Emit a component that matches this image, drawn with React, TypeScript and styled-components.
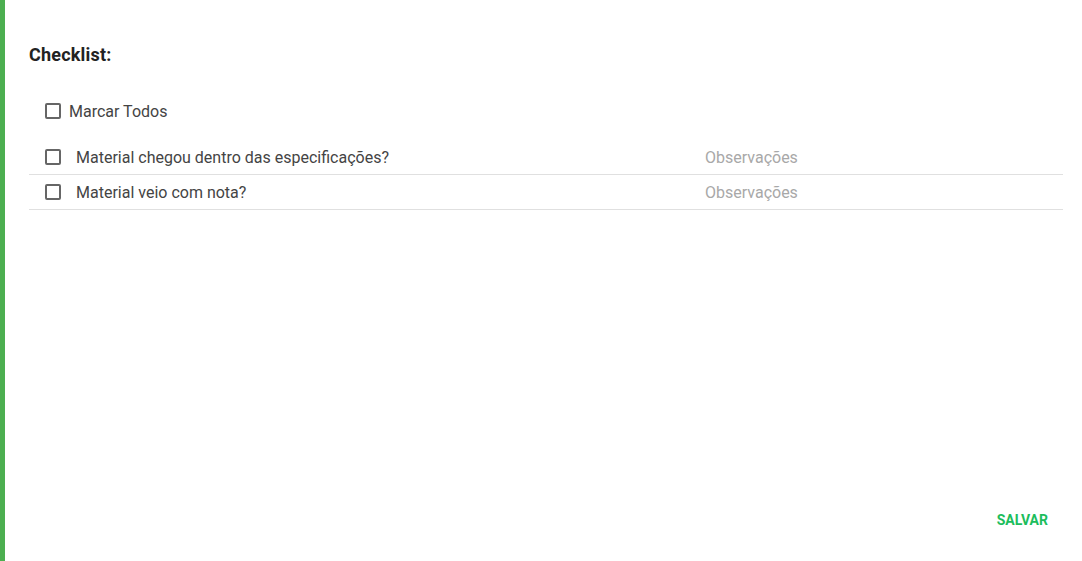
import styled, { createGlobalStyle } from "styled-components";

const GlobalStyle = createGlobalStyle`
  html, body {
    margin: 0;
    padding: 0;
    background: #fff;
    font-family: Roboto, "Liberation Sans", sans-serif;
  }
`;

const items = [
  "Material chegou dentro das especificações?",
  "Material veio com nota?",
];

export default function App() {
  return (
    <>
      <GlobalStyle />
      <Panel>
        <Content>
          <Title>Checklist:</Title>
          <SelectAll>
            <Box type="checkbox" />
            <span>Marcar Todos</span>
          </SelectAll>
          <List>
            {items.map((item) => (
              <Row key={item}>
                <ItemLabel>
                  <Box type="checkbox" />
                  <span>{item}</span>
                </ItemLabel>
                <ObsInput type="text" placeholder="Observações" />
              </Row>
            ))}
          </List>
        </Content>
        <Footer>
          <SaveButton type="button">Salvar</SaveButton>
        </Footer>
      </Panel>
    </>
  );
}

const Panel = styled.main`
  height: 561px;
  box-sizing: border-box;
  border-left: 5px solid #4caf50;
  padding: 44px 19px 23px 24px;
  display: flex;
  flex-direction: column;
`;

const Content = styled.section`
  flex: 1;
  display: flex;
  flex-direction: column;
`;

const Title = styled.h2`
  margin: 0;
  font-size: 18px;
  line-height: 22px;
  font-weight: 700;
  letter-spacing: 0.2px;
  color: #222;
`;

const Box = styled.input`
  appearance: none;
  -webkit-appearance: none;
  margin: 0;
  width: 16px;
  height: 16px;
  box-sizing: border-box;
  border: 2px solid #666;
  border-radius: 2px;
  background: #fff;
  flex-shrink: 0;
  cursor: pointer;
`;

const SelectAll = styled.label`
  margin-top: 33px;
  padding-left: 16px;
  height: 24px;
  display: flex;
  align-items: center;
  gap: 8px;
  font-size: 16px;
  color: #444;
`;

const List = styled.div`
  margin-top: 17px;
  display: flex;
  flex-direction: column;
`;

const Row = styled.div`
  height: 35px;
  box-sizing: border-box;
  border-bottom: 1px solid #e0e0e0;
  padding-left: 16px;
  display: grid;
  grid-template-columns: 660px 1fr;
  align-items: center;
`;

const ItemLabel = styled.label`
  display: flex;
  align-items: center;
  gap: 15px;
  font-size: 16px;
  color: #444;
`;

const ObsInput = styled.input`
  border: 0;
  outline: none;
  padding: 0;
  background: transparent;
  font-family: inherit;
  font-size: 16px;
  color: #444;

  &::placeholder {
    color: #a8a8a8;
  }
`;

const Footer = styled.footer`
  display: flex;
  justify-content: flex-end;
`;

const SaveButton = styled.button`
  border: 0;
  background: transparent;
  padding: 0 15px 0 16px;
  height: 36px;
  font-family: inherit;
  font-size: 14px;
  font-weight: 700;
  text-transform: uppercase;
  color: #1cbd5c;
  cursor: pointer;
`;
